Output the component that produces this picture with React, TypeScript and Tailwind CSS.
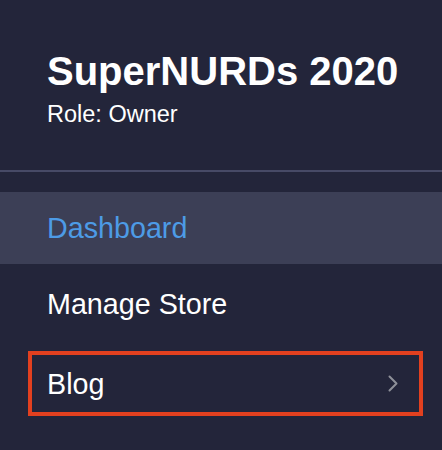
import React from "react";

export default function App() {
  return (
    <div
      className="w-[442px] h-[450px] bg-[#23253a] overflow-hidden"
      style={{ fontFamily: '"Liberation Sans", Arial, sans-serif' }}
    >
      <div className="pl-[47px] pt-[47px]">
        <div className="text-[40px] leading-[48px] font-bold text-white">SuperNURDs 2020</div>
        <div className="mt-[5px] text-[23.5px] leading-[28px] text-white">Role: Owner</div>
      </div>
      <div className="mt-[42px] h-[2px] bg-[#474a66]" />
      <div className="mt-[20px] h-[72px] bg-[#3c3f56] flex items-center pl-[47px]">
        <span className="text-[28.7px] leading-[32px] text-[#4d9be6]">Dashboard</span>
      </div>
      <div className="mt-[4px] h-[72px] flex items-center pl-[47px]">
        <span className="text-[28.7px] leading-[32px] text-white">Manage Store</span>
      </div>
      <div className="mt-[11px] ml-[28px] mr-[19px] h-[65px] border-[4px] border-[#e2401f] flex items-center justify-between pl-[15px] pr-[21px]">
        <span className="text-[28.7px] leading-[32px] text-white">Blog</span>
        <svg width="10" height="17" viewBox="0 0 10 17" fill="none">
          <polyline points="1.5,1.5 8.5,8.5 1.5,15.5" stroke="#8e9099" strokeWidth="2" strokeLinecap="round" strokeLinejoin="round" />
        </svg>
      </div>
    </div>
  );
}
